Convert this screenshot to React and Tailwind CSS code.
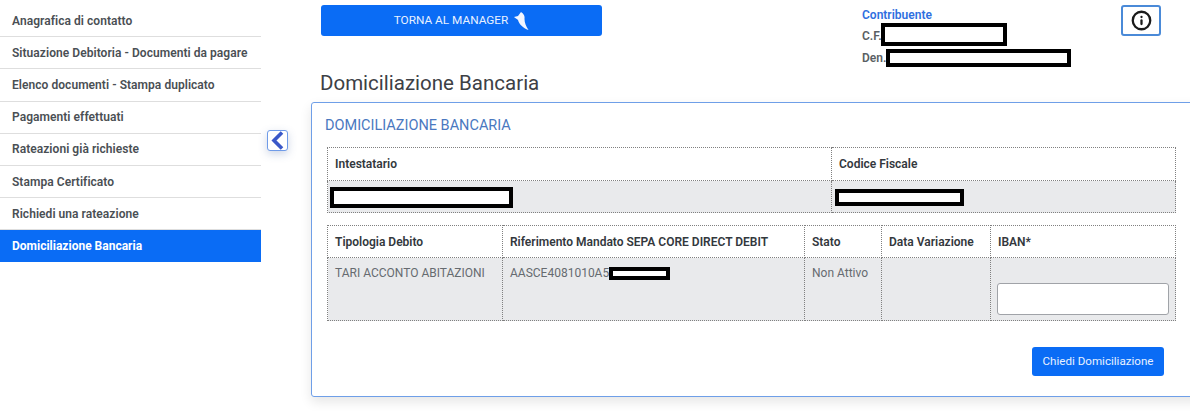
import { Info } from "lucide-react";

const menuItems = [
  "Anagrafica di contatto",
  "Situazione Debitoria - Documenti da pagare",
  "Elenco documenti - Stampa duplicato",
  "Pagamenti effettuati",
  "Rateazioni già richieste",
  "Stampa Certificato",
  "Richiedi una rateazione",
];

const Redaction = ({ className }) => (
  <span className={`inline-block border-[4px] border-black bg-white align-middle ${className}`} />
);

const headCell = "border border-dotted border-[#808080] px-[7px] text-left align-middle text-[12px] font-semibold text-[#33383d]";
const bodyCell = "border border-dotted border-[#808080] px-[7px] align-top text-[12px] text-[#666b70]";

export default function App() {
  return (
    <div className="flex h-[411px] w-[1190px] overflow-hidden bg-white font-['Roboto',sans-serif]">
      <nav className="w-[261px] shrink-0 pt-[5px]">
        {menuItems.map((item) => (
          <div
            key={item}
            className="flex h-[32.2px] items-center border-b border-[#dedede] pl-3 text-[12px] font-semibold tracking-[0.05px] text-[#4a4f54]"
          >
            {item}
          </div>
        ))}
        <div className="flex h-[32px] items-center bg-[#0a6cf5] pl-3 text-[12px] font-bold text-white">
          Domiciliazione Bancaria
        </div>
      </nav>

      <div className="w-[50px] shrink-0 pl-[6px] pt-[130px]">
        <button className="flex h-[21px] w-[21px] items-center justify-center rounded-[3px] border border-[#6f9be8] bg-white shadow-[0_3px_8px_rgba(60,90,160,0.25)]">
          <svg width="19" height="19" viewBox="0 0 19 19" fill="none" stroke="#3a58c8" strokeWidth="3.6">
            <polyline points="14,1.5 6,9.5 14,17.5" />
          </svg>
        </button>
      </div>

      <main className="w-[900px] shrink-0">
        <div className="flex h-[70px] pt-[5px]">
          <div className="ml-[10px] flex h-[31px] w-[281px] items-center justify-center gap-[6px] rounded-[3px] bg-[#0a6cf5] text-[11.8px] text-[#e8f1ff]">
            TORNA AL MANAGER
            <svg width="15" height="18" viewBox="0 0 15 18" fill="#f2f6ff">
              <path d="M0 5 L4 4 L7 0 C10 2 11 4 10.5 7 C10.5 11 12 14 14.5 18 C9 16 5 12 4 8 C3 7 1 6 0 5 Z" />
            </svg>
          </div>
          <div className="ml-[260px] w-[259px] text-[12px] font-semibold leading-none">
            <div className="h-[16px] pt-[4px] text-[#2f6fe0]">Contribuente</div>
            <div className="flex h-[26px] items-center text-[#5a5f64]">
              <span className="mt-[3px]">C.F.</span>
              <Redaction className="h-[23px] w-[126px] -ml-[1px]" />
            </div>
            <div className="mt-[2px] flex h-[18px] items-center text-[#5a5f64]">
              Den.
              <Redaction className="h-[18px] w-[185px]" />
            </div>
          </div>
          <button className="flex h-[31px] w-[40px] items-center justify-center rounded-[3px] border-2 border-[#4a8ad8] bg-white">
            <Info size={21} strokeWidth={2.6} className="text-[#1a1a1a]" />
          </button>
        </div>

        <h1 className="ml-[9px] h-[32px] text-[20.5px] leading-[27px] text-[#3d4045]">Domiciliazione Bancaria</h1>

        <section className="h-[295px] rounded-l-[3px] border-[1.5px] border-[#6f9fe8] pl-[13px] pt-[14px] shadow-[0_5px_12px_rgba(0,0,0,0.1)]">
          <h2 className="text-[14.5px] leading-[18px] text-[#4a78c0]">DOMICILIAZIONE BANCARIA</h2>

          <table className="ml-[2px] mt-[12px] w-[848px] table-fixed border-collapse">
            <colgroup>
              <col className="w-[504px]" />
              <col className="w-[344px]" />
            </colgroup>
            <tbody>
              <tr className="h-[33px]">
                <th className={headCell}>Intestatario</th>
                <th className={headCell}>Codice Fiscale</th>
              </tr>
              <tr className="h-[32px] bg-[#e9eaec]">
                <td className="border border-dotted border-[#808080] pl-[2px] align-middle">
                  <Redaction className="h-[21px] w-[183px]" />
                </td>
                <td className="border border-dotted border-[#808080] pl-[3px] align-middle">
                  <Redaction className="h-[17px] w-[129px]" />
                </td>
              </tr>
            </tbody>
          </table>

          <table className="ml-[2px] mt-[12px] w-[848px] table-fixed border-collapse">
            <colgroup>
              <col className="w-[175px]" />
              <col className="w-[302px]" />
              <col className="w-[77px]" />
              <col className="w-[109px]" />
              <col className="w-[185px]" />
            </colgroup>
            <tbody>
              <tr className="h-[32px]">
                <th className={headCell}>Tipologia Debito</th>
                <th className={headCell}>Riferimento Mandato SEPA CORE DIRECT DEBIT</th>
                <th className={headCell}>Stato</th>
                <th className={headCell}>Data Variazione</th>
                <th className={headCell}>IBAN*</th>
              </tr>
              <tr className="h-[63px] bg-[#e9eaec]">
                <td className={`${bodyCell} pt-[6px]`}>TARI ACCONTO ABITAZIONI</td>
                <td className={`${bodyCell} pt-[6px]`}>
                  AASCE4081010A5
                  <Redaction className="h-[13px] w-[61px]" />
                </td>
                <td className={`${bodyCell} pt-[6px]`}>Non Attivo</td>
                <td className={bodyCell}></td>
                <td className="border border-dotted border-[#808080] px-[6px] align-bottom pb-[5px]">
                  <input className="block h-[32px] w-[172px] rounded-[3px] border border-[#a0a3a8] bg-white" />
                </td>
              </tr>
            </tbody>
          </table>

          <div className="ml-[707px] mt-[26px]">
            <button className="h-[29px] w-[132px] rounded-[3px] bg-[#0a6cf5] text-[11.6px] text-[#e8f1ff]">
              Chiedi Domiciliazione
            </button>
          </div>
        </section>
      </main>
    </div>
  );
}
